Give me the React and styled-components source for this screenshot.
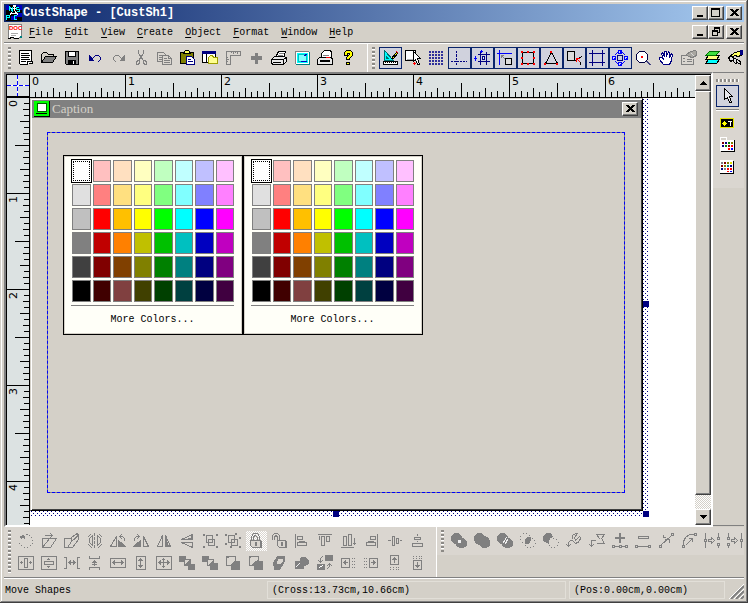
import React from 'react';
import styled, { createGlobalStyle, css } from 'styled-components';

const GlobalStyle = createGlobalStyle`
  *, *::before, *::after { box-sizing: border-box; }
  body { margin: 0; background: #d4d0c8; overflow: hidden; }
  button { font: inherit; color: inherit; margin: 0; padding: 0; border: 0; background: none; }
`;

const FACE = '#d4d0c8';
const BAR = '#dad6d0';
const NAVY = '#000080';
const GRAY = '#808080';
const BLUE = '#0000ff';
const RED = '#ff0000';
const mono = '"Liberation Mono", monospace';

/* Every entry is a list of [path, fill, stroke] on a 16 pixel grid. */
const ICONS = {
  new: [['M1 0H13V10L9 14H2L1 13Z', '#fff', '#000'], ['M3 3H10M3 5H11M3 7H10M3 9H11M3 11H7'], ['M9 14V11H13M11 13H14V11', '#fff', '#000']],
  open: [['M0 12V4L2 2H5L7 4H12V6', FACE, '#000'], ['M0 12L4 6H15L11 12Z', GRAY, '#000']],
  save: [['M1 1H14V14H2L1 13Z', GRAY, '#000'], ['M4 1H11V6H4Z', '#fff', '#000'], ['M4 10H11V14H4Z', '#000', '#000'], ['M9 11V13', 'none', '#fff']],
  undo: [['M2 5V10H6Z', NAVY, NAVY], ['M5 8L8 5H11L13 7V9L11 11', 'none', NAVY]],
  redo: [['M14 5V10H10Z', GRAY, GRAY], ['M11 8L8 5H5L3 7V9L5 11', 'none', GRAY]],
  cut: [['M5 0V3L10 10M10 0V3L5 10', 'none', GRAY], ['M4 10H6V12L5 14H3V12ZM10 10H12L13 12V14H11L10 12Z', 'none', GRAY]],
  copy: [['M1 2H7L9 4V11H1Z', BAR, GRAY], ['M3 5H6M3 7H7M3 9H6', 'none', GRAY], ['M6 5H12L15 8V14H6Z', BAR, GRAY], ['M12 5V8H15M8 8H10M8 10H13M8 12H13', 'none', GRAY]],
  paste: [['M1 2H14V13H1Z', '#808000', '#000'], ['M4 3L6 0H9L11 3Z', '#ffff60', '#000'], ['M7 6H12L15 9V14H7Z', '#fff', NAVY], ['M9 9H11M9 11H13', 'none', NAVY]],
  object: [['M0 1H13V12H0Z', '#fff', '#000'], ['M0 1H13V3H0Z', NAVY, NAVY], ['M4 4V12', 'none', '#000'], ['M6 13V7L8 5H10L11 7H15V13Z', '#ffff90', '#a0a000']],
  ruler: [['M1 1H15V5H5V14H1Z', 'none', GRAY], ['M6 2V2M8 2V3M10 2V2M12 2V3M2 7H2M2 9H3M2 11H2', 'none', GRAY]],
  plus: [['M7 3H9V6H13V9H9V13H7V9H3V6H7Z', GRAY, GRAY]],
  print: [['M4 7L7 1H14L12 7Z', '#fff', '#000'], ['M8 3H12M7 5H11', 'none', GRAY], ['M0 9L3 6H13L15 8V11L12 14H1L0 12Z', '#e8e8e8', '#000'], ['M0 9H12V14M12 9L15 7M2 12H9']],
  preview: [['M2 2H14V13H2Z', '#00ffff', '#fff'], ['M1 1H14', 'none', GRAY], ['M1 1V13', 'none', GRAY], ['M4 4H12V11H4Z', '#80ffff', '#00c0c0'], ['M7 11H12M10 5L12 4', 'none', '#0000c0'], ['M15 2V14H2', 'none', '#008080']],
  fax: [['M4 8V3L7 0H13L14 2V8', '#fff', '#000'], ['M6 5H11', 'none', GRAY], ['M0 9L2 7H14L15 9V14H0Z', '#e8e8e8', '#000'], ['M3 10H12V11H3Z', '#fff', '#000'], ['M9 7H12', 'none', RED]],
  help: [['M4 5V2L6 0H10L12 2V5L9 8V9H6V7L9 4V3H7V5Z', '#ffff00', '#000'], ['M6 12H9V14H6Z', '#ffff00', '#000']],
  design: [['M2 0V10H11Z', '#00ffff', '#007070'], ['M4 6V8H6Z', BAR, '#007070'], ['M1 11H15V14H1Z', '#fff', '#000'], ['M3 12V12M5 12V12M7 12V12M9 12V12M11 12V12M13 12V12'], ['M9 8L14 2L15 3L11 8Z', '#ffff00', '#000'], ['M14 1L15 2', 'none', RED]],
  select: [['M0 0H10V10H0Z', '#fff', '#000'], ['M2 9H9V2', 'none', '#b0b0b0'], ['M8 1V11L10 9L12 14H14L12 8H15Z', '#fff', '#000'], ['M9 12V14M8 13H10', 'none', RED]],
  dots: [[[1, 4, 7, 10, 13].flatMap((y) => [1, 4, 7, 10, 13].map((x) => `M${x} ${y}h1M${x} ${y + 1}h1`)).join(''), 'none', '#30309a']],
  cross: [['M5 1V2M5 4V6M5 8V9M5 13V14M0 11H1M3 11H7M9 11H10M12 11H13M15 11h0', 'none', NAVY]],
  guides: [['M6 2V14M12 2V14M4 4H15M4 11H15', 'none', NAVY], ['M8 6H10V9H8Z', '#dfe4ff', NAVY], ['M1 6V10M0 8H2M7 0V2M6 1H8', 'none', BLUE]],
  snap: [['M0 3H14M2 0V14', 'none', BLUE], ['M4 5L8 9M4 5H6M4 5V7', 'none', GRAY], ['M8 8H14V14H8Z', '#dcdcdc', '#000']],
  resize: [['M2 2H13V13H2Z', 'none', '#000'], ['M1 1h1v1h-1zM7 1h1v1h-1zM13 1h1v1h-1zM1 7h1v1h-1zM13 7h1v1h-1zM1 13h1v1h-1zM7 13h1v1h-1zM13 13h1v1h-1z', RED, RED]],
  nodes: [['M8 2L2 13H14Z', 'none', '#000'], ['M7 1h1v1h-1zM1 13h1v1h-1zM13 13h1v1h-1z', RED, RED]],
  link: [['M1 1H8V10H1Z', '#dcdcdc', '#000'], ['M8 10H9M12 8L15 6'], ['M10 8V11M10 8H13M10 8L14 12', 'none', RED], ['M14 12V14']],
  crop: [['M3 0V15M13 0V15M0 3H15M0 12H15', 'none', NAVY]],
  rotate3: [['M6 0h3v3h-3zM0 6h3v3h-3zM12 6h3v3h-3zM6 12h3v3h-3z', '#c8d4ff', BLUE], ['M8 1V2M2 8H2M14 8H14M8 14H8M3 4L5 2M10 2L12 4M3 11L5 13M12 11L10 13', 'none', BLUE], ['M5 5H10V10H5Z', 'none', NAVY]],
  zoom: [['M4 1H9L12 4V9L9 12H4L1 9V4Z', '#fff', '#000040'], ['M6 6h1v1h-1z', RED, RED], ['M11 11L14 14M12 11L15 14', 'none', '#404080']],
  hand: [['M5 14L1 9V7H3L5 9L3 3L4 2L6 6V1H8V6L10 1L11 2V7L13 3L14 4L13 10L11 14Z', '#fff', NAVY]],
  props: [['M0 5H8M0 5V14H12V9', 'none', GRAY], ['M2 8H3M6 9H10M2 11H3M6 11H10', 'none', GRAY], ['M5 4L9 1L14 0L15 1V5L11 7L7 6Z', '#a8a6a0', GRAY], ['M10 3L12 5', 'none', '#d8d8d8']],
  layers: [['M1 13L4 9H15L12 13Z', '#00ffff', '#000'], ['M1 9L4 5H15L12 9Z', '#ffff80', '#000'], ['M1 5L5 1H15L11 5Z', '#40e040', '#007000']],
  tag: [['M1 7L7 2L12 1L15 4L11 6L7 5L3 9Z', '#ffff60', '#000'], ['M1 7L4 6L13 11V14L10 12L8 13L5 10L3 11Z', '#e0e0e0', '#000'], ['M13 0H15V4H13Z', '#00008b', NAVY], ['M6 8V11M9 9V12']],
  pointer: [['M5 0V11L8 9L10 14H12L10 8H13Z', '#e8e8ee', '#000']],
  field: [['M1 3H14V12H1Z', '#000', '#e6e600'], ['M3 8H7M5 6V10M4 7L6 9M6 7L4 9', 'none', '#ffff00'], ['M9 6H12M11 6V10', 'none', '#fff']],
  paletteTab: [['M1 3H14V13H1Z', '#fff', '#fff'], ['M1 0H7V3H1Z', FACE, '#fff'], ['M15 3V14H2'], ['M3 5h1v1h-1zM9 8h1v1h-1z', '#800000', '#800000'], ['M6 5h1v1h-1zM3 8h1v1h-1z', NAVY, NAVY], ['M9 5h1v1h-1zM6 8h1v1h-1z', '#008000', '#008000'], ['M12 5h1v1h-1z', '#808000', '#808000'], ['M12 8h1v1h-1zM9 11h1v1h-1z', RED, RED], ['M12 11h1v1h-1z', BLUE, BLUE]],
  palette: [['M1 1H13V13H1Z', '#fff', '#fff'], ['M14 2V14H1'], ['M2 3h1v1h-1zM5 9h1v1h-1z', GRAY, GRAY], ['M5 3h1v1h-1zM2 6h1v1h-1z', '#800000', '#800000'], ['M8 3h1v1h-1zM5 6h1v1h-1z', '#808000', '#808000'], ['M11 3h1v1h-1z', '#e0e000', '#e0e000'], ['M8 6h1v1h-1z', '#008080', '#008080'], ['M11 6h1v1h-1zM2 9h1v1h-1z', NAVY, NAVY], ['M8 9h1v1h-1zM11 9h1v1h-1zM8 12h1', RED, RED], ['M11 12h1', BLUE, BLUE]],
  rotate: [['M2 3H6V5M5 2L2 3L3 5Z', GRAY], ['M8 1h1M11 2h0M13 4h0M14 7h0M14 10h0M12 12h0M9 14h0M6 14h0M3 12h0M1 10h0']],
  skewTop: [['M1 5H8M1 5V14'], ['M1 14L8 5H15L9 14Z', BAR], ['M4 2H11M9 0L11 2L9 4', 'none']],
  skewSide: [['M0 5H7V14H0Z'], ['M3 14L7 8L14 2V6L8 14Z', BAR], ['M7 4L11 1H14M12 0L14 1L12 3']],
  flipBoth: [['M5 2V12L2 9V5ZM10 2V12L13 9V5Z'], ['M7 0V2M7 4V6M7 8V10M7 12V14'], ['M1 3L3 1M12 1L14 3M1 11L4 14M14 11L11 14']],
  rotLeft: [['M6 3V13H0Z'], ['M8 7L15 13H8Z', GRAY], ['M14 7V5L12 3H9M11 1L9 3L11 5']],
  rotRight: [['M10 3V13H15Z'], ['M7 7L0 13H7Z', GRAY], ['M1 7V5L3 3H6M4 1L6 3L4 5']],
  mirror: [['M6 2V13H1Z'], ['M9 2V13H14Z'], ['M10 6V12M11 9V12M12 12H13']],
  flip: [['M13 1V6H2Z'], ['M12 3V5H9'], ['M13 14V9H2Z']],
  group: [['M1 1h1v1h-1zM14 1h1v1h-1zM1 13h1v1h-1zM14 13h1v1h-1z'], ['M4 2H10V9H4Z'], ['M6 6H12V12H6Z']],
  ungroup: [['M0 1h1v1h-1zM10 0h1v1h-1zM0 10h1v1h-1zM14 4h1v1h-1zM5 13h1v1h-1zM14 13h1v1h-1z'], ['M3 2H9V9H3Z'], ['M6 6H12V12H6Z']],
  lock: [['M3 7V3L5 0H9L11 3V7M5 7V3L7 2L9 4V7'], ['M2 7H12V14H4L2 12Z', BAR], ['M13 8V14H5M7 9V12M8 9V12']],
  unlock: [['M1 6V2L3 0H6L8 2V7M3 6V3L5 2L6 4V7'], ['M6 7H14V14H8L6 12Z'], ['M15 8V14H9M10 9V12M11 9V12']],
  alignLeft: [['M1 1V14M3 3H8V6H3ZM3 9H12V12H3Z'], ['M5 8H10']],
  alignTop: [['M1 1H14M4 3H7V12H4ZM9 3H12V8H9Z'], ['M2 3V6']],
  alignBottom: [['M1 14H13M3 3H6V12H3ZM8 1H11V12H8Z'], ['M14 5V11M13 10H15']],
  alignRight: [['M14 1V14M7 3H12V6H7ZM3 9H12V12H3Z'], ['M5 8H10']],
  centerH: [['M2 7H4M6 3H8V12H6ZM10 5H12V10H10ZM14 7H15']],
  centerV: [['M8 1V2M5 4H11V6H5ZM8 8V8M3 10H13V13H3Z']],
  inH: [['M0 1H15V14H0Z'], ['M6 3H9V12H6Z'], ['M2 7H4M11 7H13M3 6V8M12 6V8']],
  inV: [['M0 1H15V14H0Z'], ['M3 6H12V9H3Z'], ['M7 3V4M7 11V12M6 4H8M6 11H8']],
  spaceH: [['M0 2H2V13H0M15 2H13V13H15'], ['M4 7H11M6 5V9M5 6V8M9 5V9M10 6V8']],
  spaceV: [['M2 1V3H12V1M2 14V12H12V14'], ['M7 5V10M6 6H8M5 7H9M5 9H9']],
  sameW: [['M0 3H15V12H0Z'], ['M2 7H13M4 5V9M11 5V9M3 6V8M12 6V8']],
  sameH: [['M3 1H12V14H3Z'], ['M7 3V12M5 5H9M5 10H9M6 4H8M6 11H8']],
  sameBoth: [['M0 1H15V14H0Z'], ['M2 7H13M7 3V12M3 6V8M12 6V8M6 4H8M6 11H8M4 5V9M11 5V9']],
  front: [['M0 1H6V6H0ZM9 9H15V14H9Z', GRAY], ['M5 4H11V10H5Z', BAR], ['M5 10L11 4V10Z', GRAY]],
  back: [['M0 1H6V6H0ZM8 8H15V14H8Z', GRAY], ['M5 4H11V10H5Z', BAR], ['M6 10L11 5V10Z', GRAY]],
  forward: [['M6 6H14V14H6Z', GRAY], ['M1 1H10V10H1Z', BAR], ['M1 2L5 1H1ZM5 10L10 5V10Z', GRAY]],
  backward: [['M6 6H14V14H6Z', GRAY], ['M1 1H10V10H1Z', BAR], ['M1 2L4 1H1Z', GRAY], ['M3 10L10 4V10Z', GRAY]],
  before: [['M2 7L6 1H13V6L8 14H3Z', GRAY], ['M6 3H12V6L9 9H5Z', BAR]],
  behind: [['M1 6H9V13H1Z', GRAY], ['M7 2H11L14 5V8L11 10H9L6 7V4Z', GRAY], ['M2 11L5 8', 'none', '#eee']],
  swap: [['M8 0H15V5H8ZM0 9H7V14H0Z', GRAY], ['M2 12L5 10', 'none', '#fff'], ['M5 1L3 3V6M1 5L3 7L5 5M10 13L12 11V8M10 10L12 8L14 10']],
  nudgeLeft: [['M1 3H9V12H1Z'], ['M3 7H7M5 5V9M4 6V8M12 3h0M12 6h0M12 9h0M12 12h0M14 3h0M14 6h0M14 9h0M14 12h0']],
  nudgeRight: [['M6 3H14V12H6Z'], ['M8 7H12M10 5V9M11 6V8M1 3h0M1 6h0M1 9h0M1 12h0M3 3h0M3 6h0M3 9h0M3 12h0']],
  nudgeUp: [['M4 0H12V9H4Z'], ['M8 2V7M6 4H10M7 3H9M4 12h0M7 12h0M10 12h0M12 12h0M4 14h0M7 14h0M10 14h0M12 14h0']],
  nudgeDown: [['M4 5H12V14H4Z'], ['M8 7V12M6 10H10M7 11H9M4 1h0M7 1h0M10 1h0M12 1h0M4 3h0M7 3h0M10 3h0M12 3h0']],
  combine: [['M3 0H7L10 3V7L7 10H3L0 7V3Z', GRAY], ['M9 5H12L15 8V12L12 14H8L5 12V8Z', GRAY], ['M7 7H9V9H7Z', '#eee', '#eee']],
  union: [['M3 0H7L10 3L13 4L15 7V12L12 14H8L5 11L2 10L0 7V3Z', GRAY]],
  intersectOut: [['M3 0H7L10 3V7L7 10H3L0 7V3Z', GRAY], ['M9 5H12L15 8V12L12 14H8L5 12V8Z', GRAY], ['M6 9L9 4M8 10L10 6', 'none', '#eee']],
  intersect: [['M5 6L7 4H10V7L8 10H5Z', GRAY], ['M3 0h0M6 0h0M9 2h0M0 3h0M0 6h0M2 9h0M12 5h0M14 7h0M15 10h0M13 13h0M10 14h0M7 14h0M5 12h0']],
  subtract: [['M3 0H7L9 3L6 5L5 9H3L0 7V3Z', GRAY], ['M10 5h0M13 6h0M15 9h0M14 12h0M11 14h0M8 14h0M6 12h0M5 10h0']],
  curve: [['M6 5L6 2L9 0H11L8 4L9 7L13 3L14 4L13 8L9 10L6 7H4L2 9V13M0 11L2 13L4 11']],
  polyline: [['M7 1H15L12 5L15 10H8M7 1L10 5M6 7H2V13M0 11L2 13L4 11']],
  addNode: [['M7 0H8V4H12V5H8V9H7V5H3V4H7Z'], ['M1 13H15'], ['M0 12h2v2h-2zM7 12h2v2h-2zM13 12h2v2h-2z', BAR]],
  delNode: [['M3 3H13V5H3Z'], ['M1 13H15'], ['M0 12h2v2h-2zM13 12h2v2h-2z', BAR]],
  line: [['M2 12L13 2M5 2V4H7M7 6H11V9'], ['M1 12h2v2h-2zM13 0h2v2h-2z', BAR]],
  arc: [['M2 12V8L4 4L8 1H13M5 11L11 5M8 5H11V8'], ['M1 12h2v2h-2zM13 0h2v2h-2z', BAR]],
  breakNode: [['M1 0V14M14 0V4M14 10V14M4 6H7V4L10 7L7 10V8H4Z'], ['M0 6h2v2h-2zM13 4h2v2h-2zM13 10h2v2h-2z', BAR]],
  joinNode: [['M1 0V4M1 10V14M14 0V14M4 6H7V4L10 7L7 10V8H4Z'], ['M0 4h2v2h-2zM0 10h2v2h-2zM13 6h2v2h-2z', BAR]],
};

const Svg = styled.svg`
  display: block;
  width: 16px;
  height: 16px;
  flex: none;
  overflow: visible;
  shape-rendering: crispEdges;
  stroke-linecap: square;
`;

function Icon({ name, color = '#000' }) {
  return (
    <Svg viewBox="0 0 16 16" aria-hidden="true">
      <g transform="translate(.5 .5)">
        {ICONS[name].map(([d, fill = 'none', stroke = color], i) => (
          <path key={i} d={d} fill={fill} stroke={stroke} />
        ))}
      </g>
    </Svg>
  );
}

const Window = styled.div`
  display: flex;
  flex-direction: column;
  height: 100vh;
  padding: 4px 4px 3px;
  background: ${FACE};
  box-shadow: inset -1px -1px #404040, inset 1px 1px ${FACE}, inset -2px -2px ${GRAY}, inset 2px 2px #fff;
  font: 10px/12px ${mono};
  color: #000;
  overflow: hidden;
`;

const TitleBar = styled.header`
  display: flex;
  align-items: center;
  flex: none;
  height: 18px;
  padding: 0 2px;
  background: linear-gradient(90deg, #0a246a, #a6caf0);
`;

const Title = styled.h1`
  flex: 1;
  margin: 0 0 0 1px;
  font: bold 12px/18px ${mono};
  color: #fff;
  white-space: pre;
`;

const bevel = css`
  background: ${FACE};
  border: 1px solid;
  border-color: #fff #404040 #404040 #fff;
  box-shadow: inset -1px -1px ${GRAY};
`;

const Captions = styled.div`
  display: flex;
  button:last-child { margin-left: 2px; }
`;

const CaptionButton = styled.button`
  ${bevel}
  display: flex;
  justify-content: center;
  width: 16px;
  height: 14px;
`;

const Glyph = styled.svg`
  width: 12px;
  height: 11px;
  flex: none;
  shape-rendering: crispEdges;
  fill: none;
  stroke: #000;
`;

const GLYPHS = {
  Minimize: <path d="M3 8.5h6M3 9.5h6" />,
  Maximize: <path d="M1.5 1.5h8v8h-8zM1 2.5h9" />,
  Restore: <path d="M4.5 4V1.5h5v5H8M4 2.5h6M2.5 4.5h5v5h-5zM2 5.5h6" />,
  Close: <path d="M2.5 2l7 7M3.5 2l7 7M9.5 2l-7 7M10.5 2l-7 7" />,
};

function Caption({ kind }) {
  return (
    <CaptionButton aria-label={kind}>
      <Glyph viewBox="0 0 12 11">{GLYPHS[kind]}</Glyph>
    </CaptionButton>
  );
}

const MenuBar = styled.nav`
  display: flex;
  align-items: center;
  flex: none;
  height: 21px;
  padding: 0 2px 0 3px;
  border-bottom: 1px solid ${GRAY};
`;

const MenuItems = styled.div`
  display: flex;
  flex: 1;
  gap: 12px;
  margin-left: 6px;
`;

const MenuItem = styled.button`
  padding-top: 2px;
  line-height: 16px;
  &::first-letter { text-decoration: underline; text-underline-offset: 2px; }
`;

const ToolbarRow = styled.div`
  display: flex;
  height: 29px;
  flex: none;
  border-top: 1px solid #fff;
  background: ${BAR};
  overflow: hidden;
`;

const Dock = styled.div`
  display: flex;
  align-items: flex-start;
  flex: none;
  height: 50px;
  background: ${FACE};
  overflow: hidden;
`;

const Band = styled.div`
  display: flex;
  flex: none;
  gap: 4px;
  padding: 3px 7px 3px 4px;
  background: ${BAR};
  border-right: ${(p) => (p.$divided ? '1px solid #fff' : '0')};
`;

const Grip = styled.span`
  width: 3px;
  flex: none;
  background: repeating-linear-gradient(#8c8a86 0 2px, #fff 2px 3px, ${BAR} 3px 4px);
`;

const Tools = styled.div`
  display: grid;
  grid-template-columns: repeat(${(p) => p.$columns}, 23px);
  grid-auto-rows: 22px;
`;

const ToolButton = styled.button`
  display: flex;
  align-items: center;
  width: 23px;
  height: 22px;
  padding-left: 2px;
  border: 1px solid transparent;
  &[aria-pressed='true'] {
    background: #d0d2dd;
    border-color: #0a246a;
  }
  ${(p) => p.$held && css`
    background: repeating-conic-gradient(#fff 0 25%, ${BAR} 0 50%) 0 0 / 2px 2px padding-box;
  `}
`;

function ToolBand({ names, columns, color, active = [], held, divided, label }) {
  return (
    <Band role="toolbar" aria-label={label} $divided={divided}>
      <Grip />
      <Tools $columns={columns}>
        {names.map((n) => (
          <ToolButton key={n} aria-label={n} aria-pressed={active.includes(n) || undefined} $held={held === n}>
            <Icon name={n} color={color} />
          </ToolButton>
        ))}
      </Tools>
    </Band>
  );
}

const Work = styled.main`
  display: flex;
  flex: 1 1 0;
  min-height: 0;
`;

const Client = styled.section`
  display: flex;
  flex: 1;
  min-width: 0;
  min-height: 0;
  border: 2px solid;
  border-color: ${GRAY} #fff #fff ${GRAY};
`;

const Sheet = styled.div`
  display: grid;
  flex: 1;
  min-width: 0;
  min-height: 0;
  grid-template: 23px minmax(0, 1fr) / 23px minmax(0, 1fr) 16px;
  border: solid #000;
  border-width: 1px 0 0 1px;
`;

const Corner = styled.div`
  border: solid #000;
  border-width: 0 1px 2px 0;
  background:
    repeating-linear-gradient(90deg, ${BLUE} 0 4px, #fff 4px 6px) 0 10px / 100% 1px no-repeat,
    repeating-linear-gradient(${BLUE} 0 4px, #fff 4px 6px) 10px 0 / 1px 100% no-repeat,
    #dce2e2;
`;

const Ruler = styled.div`
  display: flex;
  flex-direction: ${(p) => (p.$vertical ? 'column' : 'row')};
  min-height: 0;
  overflow: hidden;
  background: #dce2e2;
  border: solid #000;
  border-width: ${(p) => (p.$vertical ? '0 1px 0 0' : '0 0 1px 0')};
`;

const ticks = (dir, side) => {
  const layer = (step, offset, len) => {
    const image = `repeating-linear-gradient(${dir}, transparent 0 ${offset}px, #000 ${offset}px ${offset + 1}px, transparent ${offset + 1}px ${step}px)`;
    return side === 'bottom'
      ? `${image} 0 100% / 100% ${len}px no-repeat`
      : `${image} 100% 0 / ${len}px 100% no-repeat`;
  };
  return [layer(6, 5, 5), layer(12, 11, 6), layer(24, 23, 9), layer(96, 47, 14), layer(96, 95, 22)].join(',');
};

const Unit = styled.div`
  flex: none;
  font: 11px/11px "DejaVu Sans", sans-serif;
  ${(p) => p.$vertical
    ? css`height: 96px; padding: 2px 0 0 1px; background: ${ticks('180deg', 'right')};`
    : css`width: 96px; padding: 1px 0 0 2px; background: ${ticks('90deg', 'bottom')};`}
`;

const UpText = styled.span`
  display: block;
  width: 11px;
  writing-mode: vertical-rl;
  transform: rotate(180deg);
`;

const Canvas = styled.div`
  min-height: 0;
  background: #fff;
  overflow: hidden;
`;

const HATCH = `url("data:image/svg+xml,%3Csvg xmlns='http://www.w3.org/2000/svg' width='4' height='4'%3E%3Cpath fill='%23000080' d='M0 0h1v1H0zM2 2h1v1H2z'/%3E%3C/svg%3E")`;

/* The hatched frame and its handles lie around the selected form. */
const Selection = styled.div`
  position: relative;
  width: 619px;
  padding: 0 6px 6px 0;
  background: ${HATCH} 3px 3px;
`;

const Handle = styled.i`
  position: absolute;
  width: 6px;
  height: 6px;
  background: ${NAVY};
  right: ${(p) => (p.$x === 'mid' ? 'calc(50% + 1px)' : '0')};
  bottom: ${(p) => (p.$y === 'mid' ? 'calc(50% + 1px)' : '0')};
`;

const Form = styled.div`
  display: flex;
  flex-direction: column;
  height: 413px;
  background: ${FACE};
  border: 1px solid;
  border-color: ${FACE} #000 #000 ${FACE};
  box-shadow: inset 1px 1px #fff, inset -1px -1px #404040;
  padding: 1px;
`;

const FormCaption = styled.div`
  display: flex;
  align-items: center;
  height: 18px;
  padding: 0 3px 0 2px;
  background: ${GRAY};
  color: ${FACE};
  font: 13px/18px "Liberation Serif", serif;
`;

const FormTitle = styled.h2`
  flex: 1;
  margin: 0 0 0 2px;
  font: inherit;
`;

const Guide = styled.div`
  flex: 1;
  margin: 14px 16px 16px 15px;
  padding: 22px 0 0 15px;
  border: 1px dashed ${BLUE};
  background: linear-gradient(${FACE}, ${FACE}) padding-box, ${GRAY} border-box;
`;

const Pickers = styled.div`
  display: flex;
`;

const Picker = styled.div`
  width: 180px;
  height: 180px;
  padding: 4px 8px 4px 7px;
  background: #fffff8;
  border: 1px solid #000;
  box-shadow: inset 0 0 0 1px ${FACE};
`;

const Swatches = styled.div`
  display: grid;
  grid-template-columns: repeat(8, 1fr);
  gap: 2px;
  grid-auto-rows: 22px;
  padding-left: 1px;
`;

const Swatch = styled.button`
  border: 1px solid ${GRAY};
  background: ${(p) => p.$color};
  &[aria-pressed='true'] {
    border: 1px dotted #000;
    outline: 1px solid #000;
    outline-offset: 1px;
    box-shadow: 0 0 0 1px #fff;
    margin: 1px;
  }
`;

const MoreColors = styled.button`
  display: block;
  width: 100%;
  height: 28px;
  margin-top: 3px;
  border-top: 1px solid ${GRAY};
  text-align: center;
`;

const COLORS = `
  fff ffc0c0 ffe0c0 ffffc0 c0ffc0 c0ffff c0c0ff ffc0ff
  e0e0e0 ff8080 ffe080 ffff80 80ff80 80ffff 8080ff ff80ff
  c0c0c0 ff0000 ffc000 ffff00 00ff00 00ffff 0000ff ff00ff
  808080 c00000 ff8000 c0c000 00c000 00c0c0 0000c0 c000c0
  404040 800000 804000 808000 008000 008080 000080 800080
  000000 400000 804040 404000 004000 004040 000040 400040
`.trim().split(/\s+/).map((c) => `#${c}`);

function ColorPicker() {
  return (
    <Picker>
      <Swatches>
        {COLORS.map((c, i) => (
          <Swatch key={c} $color={c} aria-label={c} aria-pressed={i === 0 || undefined} />
        ))}
      </Swatches>
      <MoreColors>More Colors...</MoreColors>
    </Picker>
  );
}

const ScrollBar = styled.div`
  display: flex;
  flex-direction: column;
  grid-row: 1 / 3;
  grid-column: 3;
  background: repeating-conic-gradient(#fff 0 25%, ${FACE} 0 50%) 0 0 / 2px 2px;
`;

const ScrollButton = styled.button`
  ${bevel}
  display: flex;
  align-items: center;
  justify-content: center;
  height: 16px;
`;

const Thumb = styled.div`
  ${bevel}
  flex: 1;
  margin-bottom: 14px;
`;

const Arrow = styled.svg`
  width: 7px;
  height: 4px;
  fill: #000;
  shape-rendering: crispEdges;
`;

const SidePanel = styled.aside`
  width: 31px;
  flex: none;
  border-bottom: 1px solid ${GRAY};
  margin-bottom: 1px;
`;

const SideTools = styled.div`
  display: flex;
  flex-direction: column;
  align-items: center;
  padding: 6px 5px 10px 3px;
  border-top: 1px solid ${GRAY};
  background: ${BAR};
`;

const SideGrip = styled.span`
  align-self: stretch;
  height: 3px;
  margin-bottom: 3px;
  background: repeating-linear-gradient(90deg, #8c8a86 0 2px, #fff 2px 3px, ${BAR} 3px 4px);
`;

const SideRule = styled.hr`
  width: 23px;
  height: 2px;
  margin: 2px 0 1px;
  border: 0;
  border-top: 1px solid ${GRAY};
  background: #fff;
`;

const StatusBar = styled.footer`
  display: flex;
  gap: 3px;
  height: 23px;
  flex: none;
  border-top: 1px solid ${GRAY};
  box-shadow: inset 0 1px #fff;
  padding-top: 3px;
`;

const Pane = styled.div`
  flex: ${(p) => (p.$width ? `0 0 ${p.$width}px` : '1')};
  height: 18px;
  padding: 0 ${(p) => (p.$width ? 4 : 0)}px;
  border: 1px solid ${(p) => (p.$width ? '#e2dfd8' : 'transparent')};
  line-height: 18px;
  white-space: pre;
`;

const SizeGrip = styled.svg`
  width: 16px;
  height: 18px;
  flex: none;
`;

const AppIcon = styled.svg`
  width: 16px;
  height: 16px;
  flex: none;
`;

export default function App() {
  return (
    <>
      <GlobalStyle />
      <Window>
        <TitleBar>
          <AppIcon viewBox="0 0 16 16" shapeRendering="crispEdges" aria-hidden="true">
            <rect width="16" height="16" fill="#000" />
            <path d="M0 0h3v5H0zM10 8h6v4h-6zM10 0h6v5h-2zM5 11h6v4H5z" fill="#0000c0" />
            <path d="M8 1v5M5 3.5h6M7 6L4 10M9 6l3 4M4 8.5h8" fill="none" stroke="#fff" />
            <path d="M3.5 6V2l3 4V2M.5 15v-5h3v2h-3M11 14.5H8v-4h3M12.5 2h-2v2h3v2h-3" fill="none" stroke="#00ffff" />
            <path d="M7 0h3v2H7z" fill="#fff" />
          </AppIcon>
          <Title>CustShape - [CustSh1]</Title>
          <Captions>
            <Caption kind="Minimize" />
            <Caption kind="Maximize" />
            <Caption kind="Close" />
          </Captions>
        </TitleBar>

        <MenuBar>
          <AppIcon viewBox="0 0 16 16" shapeRendering="crispEdges" aria-hidden="true">
            <path d="M1.5 .5h13v12l-3 2h-4l-2-1-4 1z" fill="#fff" stroke="#808080" />
            <path d="M1.5 14.5l4-1 3 1h3" fill="none" stroke="#000" />
            <path d="M4 9.5h7M4 11.5h5" stroke="#aaa" />
            <path d="M13 12h2v2h-2z" fill="#008080" />
            <text x="2" y="6" fill="#f00" fontSize="6" fontWeight="bold" fontFamily="Liberation Sans, sans-serif">DOC</text>
          </AppIcon>
          <MenuItems>
            {['File', 'Edit', 'View', 'Create', 'Object', 'Format', 'Window', 'Help'].map((m) => (
              <MenuItem key={m}>{m}</MenuItem>
            ))}
          </MenuItems>
          <Captions>
            <Caption kind="Minimize" />
            <Caption kind="Restore" />
            <Caption kind="Close" />
          </Captions>
        </MenuBar>

        <ToolbarRow>
          <ToolBand
            label="Standard"
            columns={15}
            divided
            names={['new', 'open', 'save', 'undo', 'redo', 'cut', 'copy', 'paste', 'object', 'ruler', 'plus', 'print', 'preview', 'fax', 'help']}
          />
          <ToolBand
            label="Design"
            columns={16}
            names={['design', 'select', 'dots', 'cross', 'guides', 'snap', 'resize', 'nodes', 'link', 'crop', 'rotate3', 'zoom', 'hand', 'props', 'layers', 'tag']}
            active={['design', 'cross', 'guides', 'snap', 'resize', 'nodes', 'link', 'crop', 'rotate3']}
          />
        </ToolbarRow>

        <Work>
          <Client>
            <Sheet>
              <Corner />
              <Ruler>
                {[0, 1, 2, 3, 4, 5, 6].map((n) => <Unit key={n}>{n}</Unit>)}
              </Ruler>
              <ScrollBar>
                <ScrollButton aria-label="Scroll up">
                  <Arrow viewBox="0 0 7 4"><path d="M3 0h1v1h1v1h1v1h1v1H0V3h1V2h1V1h1z" /></Arrow>
                </ScrollButton>
                <Thumb />
                <ScrollButton aria-label="Scroll down">
                  <Arrow viewBox="0 0 7 4"><path d="M0 0h7v1H6v1H5v1H4v1H3V3H2V2H1V1H0z" /></Arrow>
                </ScrollButton>
              </ScrollBar>
              <Ruler $vertical>
                {[0, 1, 2, 3, 4].map((n) => <Unit key={n} $vertical><UpText>{n}</UpText></Unit>)}
              </Ruler>
              <Canvas>
                <Selection>
                  <Form>
                    <FormCaption>
                      <AppIcon viewBox="0 0 16 16" shapeRendering="crispEdges" aria-hidden="true">
                        <rect width="16" height="16" fill="#000" />
                        <rect width="15" height="15" fill="#0f0" />
                        <path d="M3 2h10v9H3z" fill="#006000" />
                        <path d="M4 3h8v7H4z" fill="#fff" />
                        <path d="M2 12h11v1H2z" fill="#000" />
                      </AppIcon>
                      <FormTitle>Caption</FormTitle>
                      <Caption kind="Close" />
                    </FormCaption>
                    <Guide>
                      <Pickers>
                        <ColorPicker />
                        <ColorPicker />
                      </Pickers>
                    </Guide>
                  </Form>
                  <Handle $x="end" $y="mid" />
                  <Handle $x="mid" $y="end" />
                  <Handle $x="end" $y="end" />
                </Selection>
              </Canvas>
            </Sheet>
          </Client>
          <SidePanel>
            <SideTools role="toolbar" aria-label="Tools">
              <SideGrip />
              <ToolButton aria-label="pointer" aria-pressed="true"><Icon name="pointer" /></ToolButton>
              <SideRule />
              <ToolButton aria-label="field"><Icon name="field" /></ToolButton>
              <ToolButton aria-label="paletteTab"><Icon name="paletteTab" /></ToolButton>
              <ToolButton aria-label="palette"><Icon name="palette" /></ToolButton>
            </SideTools>
          </SidePanel>
        </Work>

        <Dock>
          <ToolBand
            label="Arrange"
            columns={18}
            color={GRAY}
            divided
            held="lock"
            names={['rotate', 'skewTop', 'skewSide', 'flipBoth', 'rotLeft', 'rotRight', 'mirror', 'flip', 'group', 'ungroup', 'lock', 'unlock', 'alignLeft', 'alignTop', 'alignBottom', 'alignRight', 'centerH', 'centerV',
              'inH', 'inV', 'spaceH', 'spaceV', 'sameW', 'sameH', 'sameBoth', 'front', 'back', 'forward', 'backward', 'before', 'behind', 'swap', 'nudgeLeft', 'nudgeRight', 'nudgeUp', 'nudgeDown']}
          />
          <ToolBand
            label="Shape operations"
            columns={13}
            color={GRAY}
            names={['combine', 'union', 'intersectOut', 'intersect', 'subtract', 'curve', 'polyline', 'addNode', 'delNode', 'line', 'arc', 'breakNode', 'joinNode']}
          />
        </Dock>

        <StatusBar>
          <Pane>Move Shapes</Pane>
          <Pane $width={299}>(Cross:13.73cm,10.66cm)</Pane>
          <Pane $width={156}>(Pos:0.00cm,0.00cm)</Pane>
          <SizeGrip viewBox="0 0 16 18" aria-hidden="true">
            <path d="M3 18L16 5M8 18L16 10M13 18L16 15" stroke="#808080" strokeWidth="2" />
            <path d="M1 18L16 3M6 18L16 8M11 18L16 13" stroke="#fff" />
          </SizeGrip>
        </StatusBar>
      </Window>
    </>
  );
}
